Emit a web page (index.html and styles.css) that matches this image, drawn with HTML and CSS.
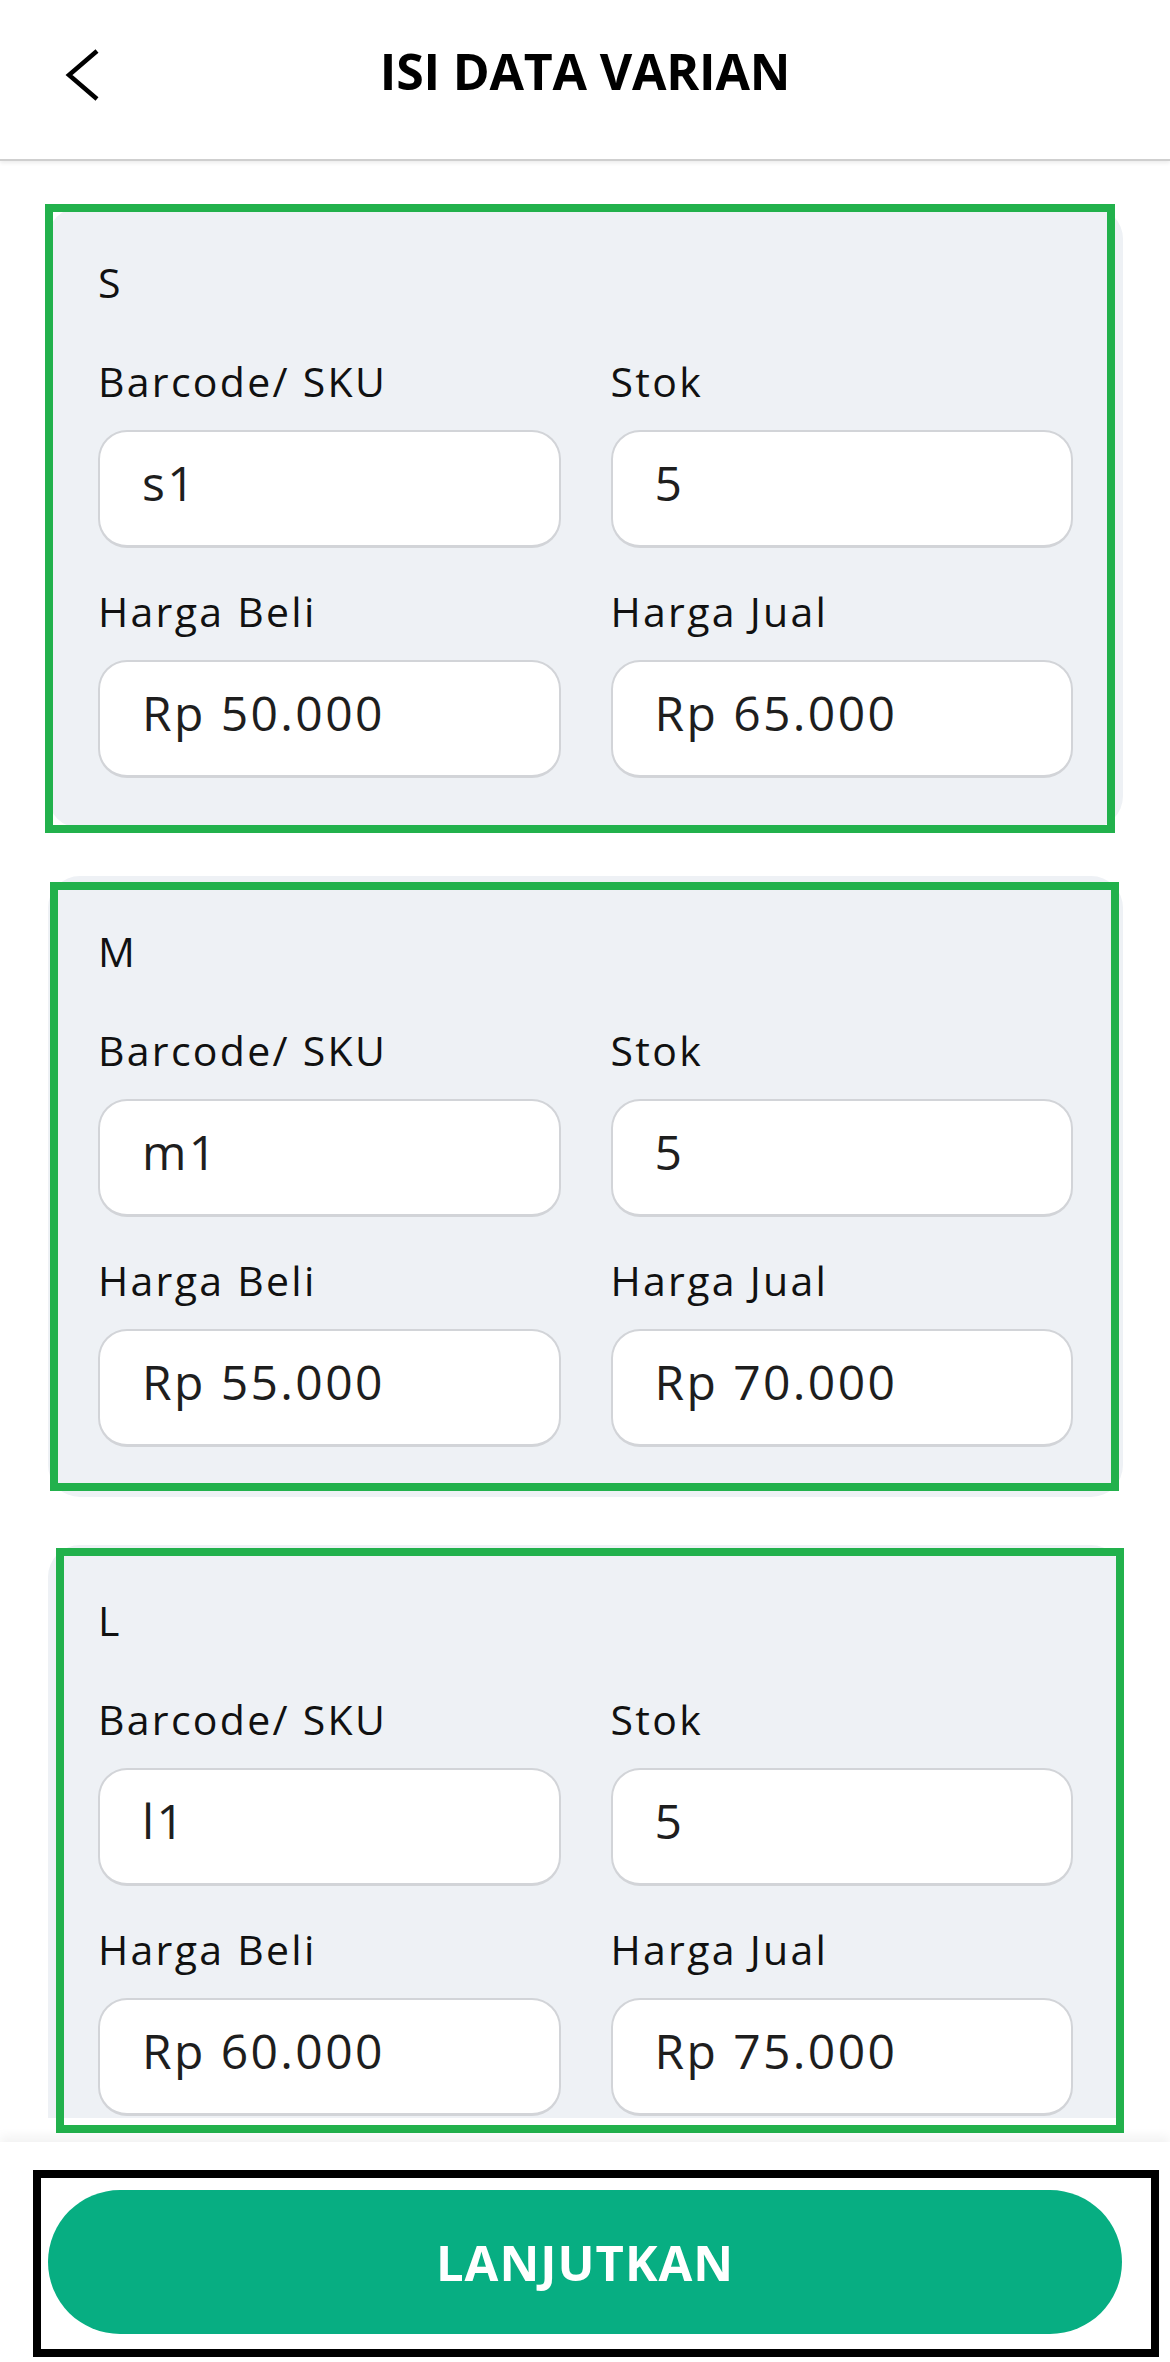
FILE: index.html
```html
<!DOCTYPE html>
<html lang="id">
<head>
<meta charset="utf-8">
<title>Isi Data Varian</title>
<link rel="stylesheet" href="styles.css">
</head>
<body>
<div class="screen">
  <header class="topbar">
    <div class="topbar-left">
      <svg class="back" width="40" height="56" viewBox="0 0 40 56" aria-hidden="true">
        <polyline points="33,4 5,28 33,52" fill="none" stroke="#000" stroke-width="4.5" stroke-linejoin="miter"/>
      </svg>
    </div>
    <h1 class="title">ISI DATA VARIAN</h1>
    <div class="topbar-right"></div>
  </header>

  <main class="content">
    <section class="variant variant--s">
      <div class="card">
        <div class="variant-name">S</div>
        <div class="fields">
          <div class="field"><div class="label">Barcode/ SKU</div><div class="input">s1</div></div>
          <div class="field"><div class="label">Stok</div><div class="input">5</div></div>
          <div class="field"><div class="label">Harga Beli</div><div class="input">Rp 50.000</div></div>
          <div class="field"><div class="label">Harga Jual</div><div class="input">Rp 65.000</div></div>
        </div>
      </div>
    </section>

    <section class="variant variant--m">
      <div class="card">
        <div class="variant-name">M</div>
        <div class="fields">
          <div class="field"><div class="label">Barcode/ SKU</div><div class="input">m1</div></div>
          <div class="field"><div class="label">Stok</div><div class="input">5</div></div>
          <div class="field"><div class="label">Harga Beli</div><div class="input">Rp 55.000</div></div>
          <div class="field"><div class="label">Harga Jual</div><div class="input">Rp 70.000</div></div>
        </div>
      </div>
    </section>

    <section class="variant variant--l">
      <div class="card card--cut">
        <div class="variant-name">L</div>
        <div class="fields">
          <div class="field"><div class="label">Barcode/ SKU</div><div class="input">l1</div></div>
          <div class="field"><div class="label">Stok</div><div class="input">5</div></div>
          <div class="field"><div class="label">Harga Beli</div><div class="input">Rp 60.000</div></div>
          <div class="field"><div class="label">Harga Jual</div><div class="input">Rp 75.000</div></div>
        </div>
      </div>
    </section>
  </main>

  <footer class="footer">
    <button class="btn" type="button">LANJUTKAN</button>
  </footer>
</div>
</body>
</html>
```

FILE: styles.css
```css
* {
  box-sizing: border-box;
}

html, body {
  margin: 0;
  padding: 0;
  background: #ffffff;
}

body {
  font-family: "Open Sans", "Noto Sans", sans-serif;
  color: #111111;
  overflow: hidden;
}

.screen {
  width: 1170px;
  height: 100vh;
  display: flex;
  flex-direction: column;
  background: #ffffff;
}

/* ---------- top bar ---------- */
.topbar {
  height: 161px;
  flex: 0 0 auto;
  display: grid;
  grid-template-columns: 1fr auto 1fr;
  align-items: start;
  padding-top: 41px;
  border-bottom: 2px solid #cfcfcf;
  box-shadow: 0 2px 4px rgba(0, 0, 0, 0.08);
  position: relative;
  z-index: 2;
  background: #ffffff;
}

.back {
  display: block;
  margin-left: 64px;
  margin-top: 6px;
}

.title {
  margin: 0;
  font-size: 50px;
  line-height: 60px;
  font-weight: 700;
  color: #000000;
  letter-spacing: -0.2px;
}

/* ---------- content ---------- */
.content {
  flex: 0 0 auto;
  display: flex;
  flex-direction: column;
  gap: 48px;
  padding: 46px 47px 0 48px;
}

.variant {
  position: relative;
}

.variant::after {
  content: "";
  position: absolute;
  border: 8px solid #22b14c;
  pointer-events: none;
}

.variant--s::after {
  top: -3px;
  left: -3px;
  right: 8px;
  bottom: -5px;
}

.variant--m::after {
  top: 6px;
  left: 2px;
  right: 4px;
  bottom: 6px;
}

.variant--l::after {
  top: 3px;
  left: 8px;
  right: -1px;
  bottom: -15px;
}

.card {
  background: #eef1f5;
  border-radius: 32px;
  padding: 50px;
  overflow: hidden;
}

.card--cut {
  height: 573px;
  border-radius: 32px 32px 0 0;
  padding-bottom: 0;
}

.variant-name {
  font-size: 41px;
  line-height: 50px;
  color: #111111;
  margin-bottom: 49px;
}

.fields {
  display: grid;
  grid-template-columns: 1fr 1fr;
  column-gap: 50px;
  row-gap: 38px;
}

.field {
  display: flex;
  flex-direction: column;
}

.label {
  font-size: 41px;
  line-height: 50px;
  letter-spacing: 2.3px;
  color: #111111;
  margin-bottom: 24px;
}

.input {
  height: 118px;
  background: #ffffff;
  border: 2px solid #d2d4d8;
  border-bottom-width: 3px;
  border-radius: 29px;
  padding: 21px 20px 0 42px;
  font-size: 48px;
  line-height: 60px;
  letter-spacing: 2.4px;
  color: #1e1e1e;
}

/* ---------- footer ---------- */
.footer {
  flex: 1 1 0;
  min-height: 0;
  margin-top: 24px;
  padding: 48px 0 0 48px;
  background: #ffffff;
  box-shadow: 0 -6px 10px rgba(0, 0, 0, 0.05);
  position: relative;
}

.footer::after {
  content: "";
  position: absolute;
  left: 33px;
  top: 28px;
  width: 1110px;
  bottom: 5px;
  border: 8px solid #000000;
  pointer-events: none;
}

.btn {
  display: block;
  width: 1074px;
  height: 144px;
  border: none;
  border-radius: 72px;
  background: #07ae82;
  color: #ffffff;
  font-family: "Open Sans", "Noto Sans", sans-serif;
  font-size: 49px;
  font-weight: 700;
  letter-spacing: 1px;
  padding: 0;
  cursor: pointer;
}
```
